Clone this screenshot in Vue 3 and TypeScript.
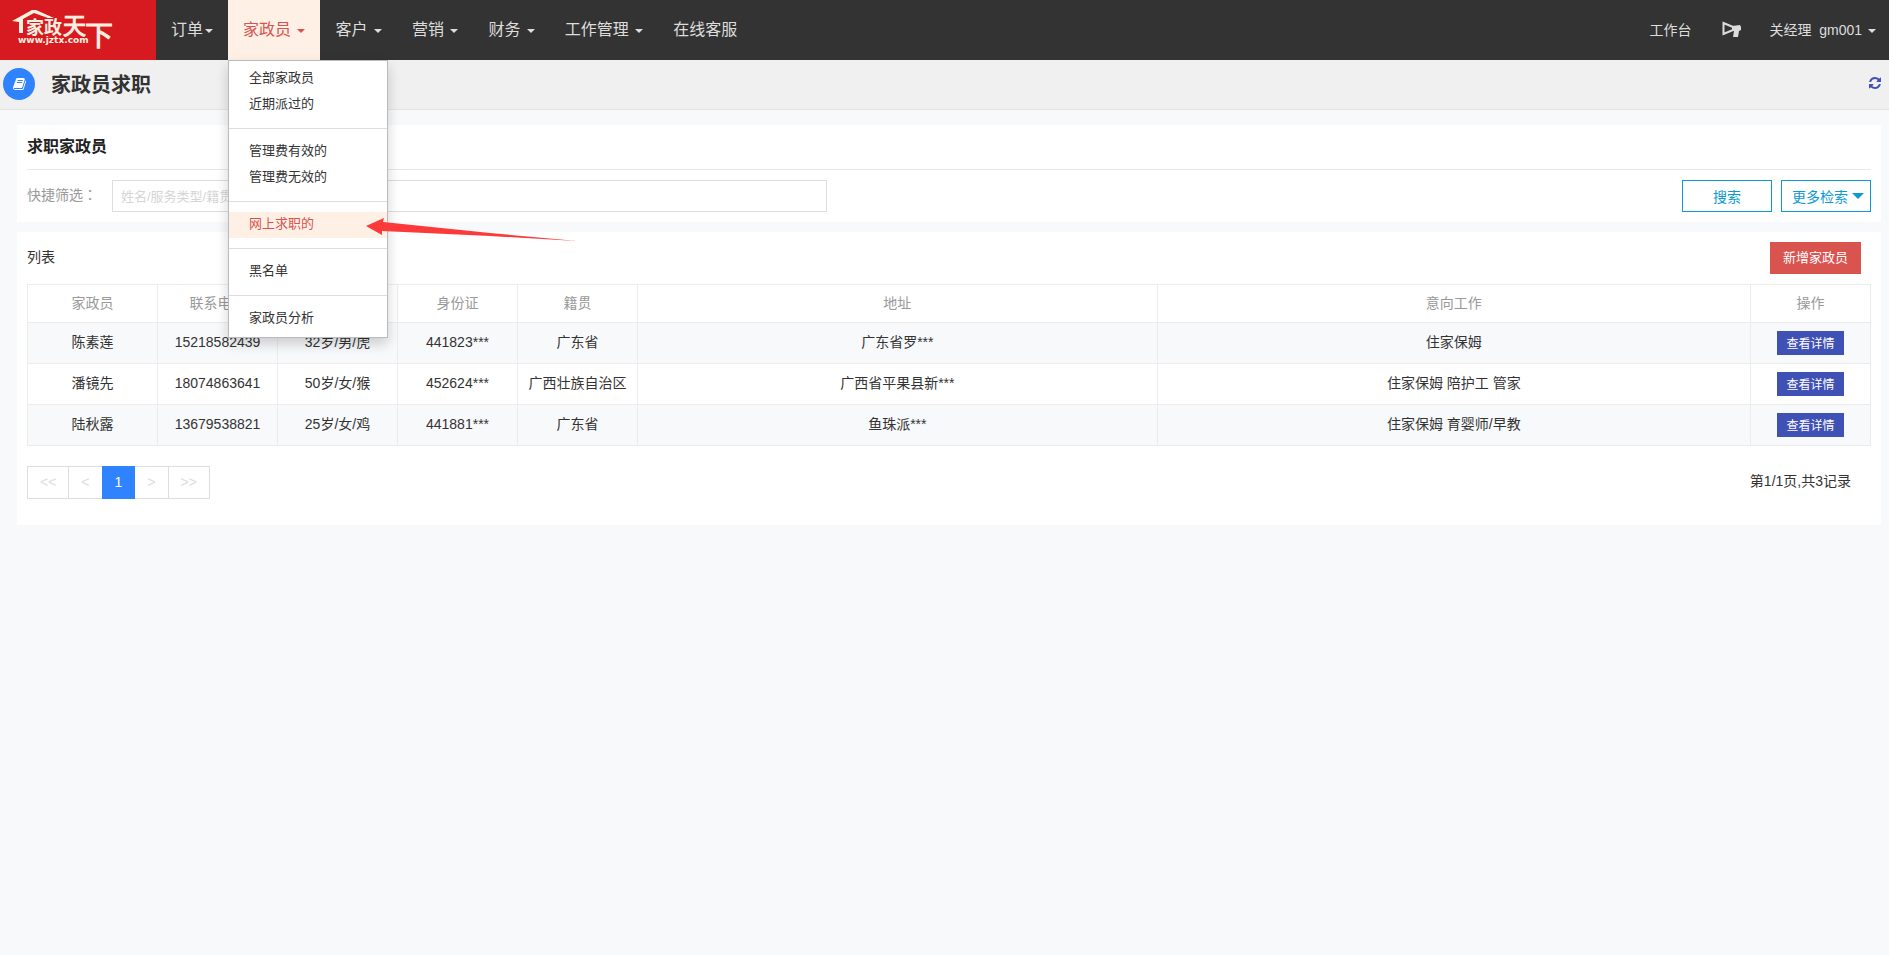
<script setup lang="ts">
import { ref } from 'vue'

interface NavItem {
  label: string
  caret?: boolean
  menu?: string[][]
}

interface Worker {
  name: string
  phone: string
  profile: string
  idCard: string
  origin: string
  address: string
  jobs: string
}

const nav: NavItem[] = [
  { label: '订单', caret: true },
  {
    label: '家政员 ',
    caret: true,
    menu: [
      ['全部家政员', '近期派过的'],
      ['管理费有效的', '管理费无效的'],
      ['网上求职的'],
      ['黑名单'],
      ['家政员分析'],
    ],
  },
  { label: '客户 ', caret: true },
  { label: '营销 ', caret: true },
  { label: '财务 ', caret: true },
  { label: '工作管理 ', caret: true },
  { label: '在线客服' },
]

const currentMenuItem = '网上求职的'
const keyword = ref('')

const columns = ['家政员', '联系电话', '年龄/性别/属相', '身份证', '籍贯', '地址', '意向工作', '操作']

const workers: Worker[] = [
  { name: '陈素莲', phone: '15218582439', profile: '32岁/男/虎', idCard: '441823***', origin: '广东省', address: '广东省罗***', jobs: '住家保姆' },
  { name: '潘镜先', phone: '18074863641', profile: '50岁/女/猴', idCard: '452624***', origin: '广西壮族自治区', address: '广西省平果县新***', jobs: '住家保姆 陪护工 管家' },
  { name: '陆秋露', phone: '13679538821', profile: '25岁/女/鸡', idCard: '441881***', origin: '广东省', address: '鱼珠派***', jobs: '住家保姆 育婴师/早教' },
]

const pages = ['<<', '<', '1', '>', '>>']
</script>

<template>
  <div class="page">
    <header class="topbar">
      <a class="logo" href="#" aria-label="家政天下">
        <svg width="156" height="60" viewBox="0 0 156 60">
          <path d="M12 21 L32 10 L36 10 L54 18 L48 18 L34 13 L23 19 L23 33 L19 33 L19 22 Z" />
          <text class="logo-bold" x="26" y="34">家政</text>
          <text class="logo-sky" x="63" y="34">天</text>
          <text class="logo-under" x="85" y="46">下</text>
          <text class="logo-url" x="18" y="43">www.jztx.com</text>
        </svg>
      </a>
      <nav class="nav">
        <div v-for="item in nav" :key="item.label" class="nav-item">
          <a href="#" class="nav-link" :class="{ open: item.menu }">{{ item.label }}<span v-if="item.caret" class="caret"></span></a>
          <div v-if="item.menu" class="menu">
            <div v-for="(group, g) in item.menu" :key="g" class="menu-group">
              <a v-for="entry in group" :key="entry" href="#" class="menu-entry" :class="{ current: entry === currentMenuItem }">{{ entry }}</a>
            </div>
            <svg class="pointer" width="214" height="28" viewBox="0 0 214 28">
              <path d="M1 12 L19 4 L18 8 L125 19 L212 27 L125 22 L17 17 L17 21 Z" />
            </svg>
          </div>
        </div>
      </nav>
      <div class="user-nav">
        <a href="#" class="user-link">工作台</a>
        <a href="#" class="user-link horn" aria-label="公告">
          <svg width="20" height="17" viewBox="0 0 20 17">
            <path class="horn-line" d="M1.500 2 L11 6 V9 L1.500 13 Z" />
            <path class="horn-fill" d="M10 5 L18 4 L19 6 V9 L17 10 L16 16 H11 L12 10 H10 Z" />
          </svg>
        </a>
        <a href="#" class="user-link">关经理&nbsp; gm001 <span class="caret"></span></a>
      </div>
    </header>

    <div class="title-bar">
      <span class="title-icon">
        <svg width="13" height="12" viewBox="0 0 1664 1536">
          <path d="M1639 350q40 57 18 129l-275 906q-19 64-76.500 107.500t-122.500 43.500h-923q-77 0-148.500-53.500t-99.500-131.500q-24-67-2-127 0-4 3-27t4-37q1-8-3-21.500t-3-19.500q2-11 8-21t16.500-23.500 16.500-23.500q23-38 45-91.500t30-91.500q3-10 .5-30t-.5-28q3-11 17-28t17-23q21-36 42-92t25-90q1-9-2.500-32t.5-28q4-13 22-30.500t22-22.500q19-26 42.500-84.500t27.500-96.500q1-8-3-25.500t-2-26.500q2-8 9-18t18-23 17-21q8-12 16.500-30.500t15-35 16-36 19.500-32 26.500-23.500 36-11.500 47.500 5.500l-1 3q38-9 51-9h761q74 0 114 56t18 130l-274 906q-36 119-71.500 153.500t-128.500 34.500h-869q-27 0-38 15-11 16-1 43 24 70 144 70h923q29 0 56-15.500t35-41.500l300-987q7-22 5-57 38 15 59 43zm-1064 2q-4 13 2 22.500t20 9.500h608q13 0 25.500-9.500t16.500-22.500l21-64q4-13-2-22.500t-20-9.500h-608q-13 0-25.500 9.500t-16.500 22.500zm-83 256q-4 13 2 22.500t20 9.500h608q13 0 25.500-9.500t16.500-22.500l21-64q4-13-2-22.500t-20-9.500h-608q-13 0-25.500 9.500t-16.500 22.500z" />
        </svg>
      </span>
      <h1>家政员求职</h1>
      <button type="button" class="refresh" aria-label="刷新">
        <svg width="12" height="12" viewBox="0 0 1536 1536">
          <path d="M1511 928q0 5-1 7-64 268-268 434.500t-478 166.500q-146 0-282.500-55t-243.500-157l-129 129q-19 19-45 19t-45-19-19-45v-448q0-26 19-45t45-19h448q26 0 45 19t19 45-19 45l-137 137q71 66 161 102t187 36q134 0 250-65t186-179q11-17 53-117 8-23 30-23h192q13 0 22.500 9.500t9.500 22.500zm25-800v448q0 26-19 45t-45 19h-448q-26 0-45-19t-19-45 19-45l138-138q-148-137-349-137-134 0-250 65t-186 179q-11 17-53 117-8 23-30 23h-199q-13 0-22.500-9.500t-9.500-22.500v-7q65-268 270-434.500t480-166.500q146 0 284 55.500t245 156.500l130-129q19-19 45-19t45 19 19 45z" />
        </svg>
      </button>
    </div>

    <main class="content">
      <section class="panel">
        <h2>求职家政员</h2>
        <form class="search" @submit.prevent>
          <label for="keyword">快捷筛选<span class="colon">：</span></label>
          <input id="keyword" v-model="keyword" type="text" placeholder="姓名/服务类型/籍贯" />
          <div class="search-actions">
            <button type="submit" class="outline">搜索</button>
            <button type="button" class="outline more">更多检索<span class="down"></span></button>
          </div>
        </form>
      </section>

      <section class="panel list">
        <div class="list-head">
          <h3>列表</h3>
          <button type="button" class="add">新增家政员</button>
        </div>
        <table>
          <colgroup>
            <col class="col-name" />
            <col span="4" class="col-short" />
            <col class="col-address" />
            <col />
            <col class="col-short" />
          </colgroup>
          <thead>
            <tr>
              <th v-for="column in columns" :key="column" scope="col">{{ column }}</th>
            </tr>
          </thead>
          <tbody>
            <tr v-for="worker in workers" :key="worker.phone">
              <td>{{ worker.name }}</td>
              <td>{{ worker.phone }}</td>
              <td>{{ worker.profile }}</td>
              <td>{{ worker.idCard }}</td>
              <td>{{ worker.origin }}</td>
              <td>{{ worker.address }}</td>
              <td>{{ worker.jobs }}</td>
              <td class="action"><button type="button" class="detail">查看详情</button></td>
            </tr>
          </tbody>
        </table>
        <div class="list-foot">
          <nav class="pager" aria-label="分页">
            <a v-for="page in pages" :key="page" href="#" :class="{ active: page === '1' }">{{ page }}</a>
          </nav>
          <span class="total">第1/1页,共3记录</span>
        </div>
      </section>
    </main>
  </div>
</template>

<style>
body {
  background: #f8f9fb;
}
</style>

<style scoped>
.page,
.page button,
.page input {
  font-family: "Liberation Sans", "Noto Sans CJK SC", sans-serif;
}
.page {
  color: #333;
  font-size: 14px;
  line-height: 20px;
}
.page *,
.page {
  box-sizing: border-box;
}
a {
  color: inherit;
  text-decoration: none;
}
button {
  padding: 0;
  border: 0;
  cursor: pointer;
}
h1,
h2,
h3 {
  margin: 0;
}

.topbar {
  display: flex;
  height: 60px;
  background: #333;
  color: #ddd;
}
.logo {
  width: 156px;
  background: #d71920;
}
.logo svg {
  display: block;
  fill: #fff0e0;
  font-family: "Liberation Sans", "Noto Sans CJK SC", sans-serif;
}
.logo-bold {
  font-size: 18px;
  font-weight: 700;
}
.logo-sky {
  font-size: 23px;
}
.logo-under {
  font-size: 28px;
}
.logo-sky,
.logo-under {
  stroke: #fff0e0;
  stroke-width: 1px;
}
.logo-url {
  font-family: "DejaVu Sans", sans-serif;
  font-size: 9px;
  font-weight: 700;
}
.nav {
  display: flex;
  flex: 1;
}
.nav-item {
  position: relative;
}
.nav-link {
  display: block;
  height: 60px;
  padding: 0 15px;
  font-size: 16px;
  line-height: 60px;
  white-space: nowrap;
}
.nav-link.open {
  background: #fff0e6;
  color: #d9534f;
}
.caret {
  display: inline-block;
  margin-left: 2px;
  border: 4px solid transparent;
  border-top-color: currentColor;
  border-bottom: 0;
  vertical-align: middle;
}
.menu {
  position: absolute;
  top: 60px;
  left: 0;
  z-index: 10;
  width: 160px;
  padding: 5px 0;
  border: 1px solid #bbb;
  background: #fff;
  box-shadow: 0 6px 12px rgba(0, 0, 0, 0.175);
  color: #333;
  font-size: 13px;
}
.menu-group + .menu-group {
  margin-top: 10px;
  padding-top: 10px;
  border-top: 1px solid #ddd;
}
.menu-entry {
  display: block;
  padding: 0 20px 2px;
  line-height: 24px;
}
.menu-entry.current {
  background: #fff0e6;
  color: #d9534f;
}
.pointer {
  position: absolute;
  top: 153px;
  left: 136px;
  fill: #fc3a3a;
}
.user-nav {
  display: flex;
  align-items: center;
  padding-right: 13px;
}
.user-link {
  line-height: 60px;
  white-space: pre;
}
.horn {
  display: flex;
  margin: 0 28px 2px 30px;
}
.horn-line {
  fill: none;
  stroke: #ddd;
  stroke-width: 2;
}
.horn-fill {
  fill: #ddd;
}

.title-bar {
  display: flex;
  align-items: center;
  height: 50px;
  padding: 0 8px 2px 3px;
  border-bottom: 1px solid #e4e4e4;
  background: #f0f0f0;
}
.title-icon {
  display: flex;
  align-items: center;
  justify-content: center;
  width: 32px;
  height: 32px;
  margin-right: 16px;
  border-radius: 50%;
  background: #3083ff;
  fill: #fff;
}
h1 {
  flex: 1;
  padding-top: 2px;
  font-size: 20px;
  line-height: 28px;
}
.refresh {
  display: flex;
  padding-bottom: 2px;
  background: none;
  fill: #3f51b5;
}

.content {
  display: flex;
  flex-direction: column;
  gap: 10px;
  padding: 15px 8px 15px 17px;
}
.panel {
  padding: 0 10px 10px;
  background: #fff;
}
h2 {
  border-bottom: 1px solid #e8e8e8;
  color: #222;
  font-size: 16px;
  line-height: 44px;
}
.search {
  display: flex;
  padding-top: 10px;
}
.search label {
  width: 85px;
  color: #999;
  line-height: 30px;
}
.colon {
  font-family: "Noto Sans CJK TC", sans-serif;
  line-height: 20px;
}
.search input {
  width: 38.8%;
  height: 32px;
  padding: 0 8px;
  border: 1px solid #ddd;
  border-radius: 0;
  background: #fff;
  color: #333;
  font-size: 13px;
}
.search input::placeholder {
  color: #d5d5d5;
}
.search-actions {
  display: flex;
  gap: 9px;
  margin-left: auto;
}
.outline {
  display: flex;
  align-items: center;
  justify-content: center;
  width: 90px;
  height: 32px;
  border: 1px solid #0c9ad2;
  background: #fff;
  color: #0c9ad2;
  font-size: 14px;
}
.more {
  padding-left: 4px;
}
.down {
  margin-left: 4px;
  border: 6px solid transparent;
  border-top-color: currentColor;
  border-bottom: 0;
}

.list {
  padding: 10px 10px 26px;
}
.list-head {
  display: flex;
  align-items: center;
  justify-content: space-between;
  margin-bottom: 10px;
  padding-right: 10px;
}
h3 {
  padding-bottom: 2px;
  font-size: 14px;
  font-weight: 400;
}
.add {
  height: 32px;
  padding: 0 13px 4px;
  background: #d9534f;
  color: #fff;
  font-size: 13px;
}
table {
  width: 100%;
  border-collapse: collapse;
  table-layout: fixed;
}
.col-name {
  width: 130px;
}
.col-short {
  width: 120px;
}
.col-address {
  width: 28.2%;
}
th,
td {
  padding: 0 0 2px;
  border: 1px solid #ececec;
  text-align: center;
  white-space: nowrap;
}
th {
  height: 38px;
  color: #999;
  font-weight: 400;
}
td {
  height: 41px;
}
.action {
  padding: 0;
}
tbody tr:nth-child(odd) {
  background: #f8f9fb;
}
.detail {
  height: 24px;
  padding: 0 9px 2px;
  background: #3f51b5;
  color: #fff;
  font-size: 12px;
  vertical-align: middle;
}
.list-foot {
  display: flex;
  justify-content: space-between;
  padding: 20px 20px 0 0;
}
.pager {
  display: flex;
}
.pager a {
  padding: 0 12px;
  border: 1px solid #ddd;
  color: #ddd;
  line-height: 31px;
}
.pager a + a {
  margin-left: -1px;
}
.pager a.active {
  z-index: 1;
  border-color: #3083ff;
  background: #3083ff;
  color: #fff;
}
.total {
  line-height: 31px;
}
</style>
